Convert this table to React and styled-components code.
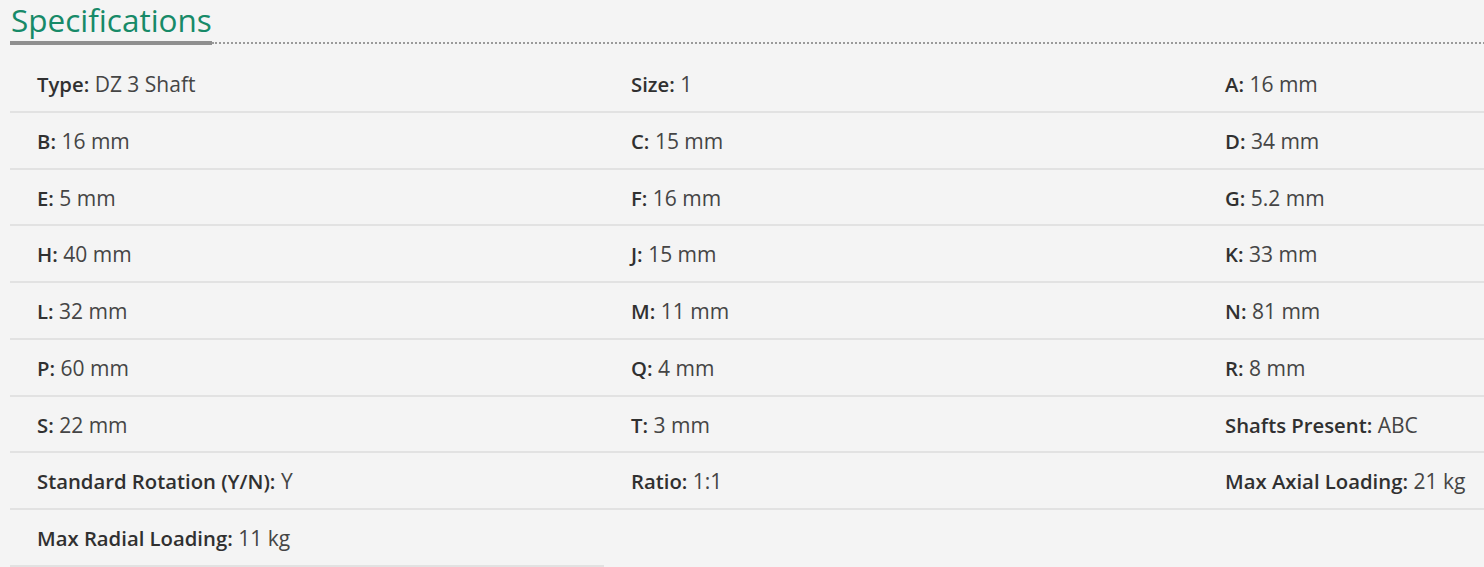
import React from 'react';
import styled, { createGlobalStyle } from 'styled-components';

const specs = [
  ['Type', 'DZ 3 Shaft'],
  ['Size', '1'],
  ['A', '16 mm'],
  ['B', '16 mm'],
  ['C', '15 mm'],
  ['D', '34 mm'],
  ['E', '5 mm'],
  ['F', '16 mm'],
  ['G', '5.2 mm'],
  ['H', '40 mm'],
  ['J', '15 mm'],
  ['K', '33 mm'],
  ['L', '32 mm'],
  ['M', '11 mm'],
  ['N', '81 mm'],
  ['P', '60 mm'],
  ['Q', '4 mm'],
  ['R', '8 mm'],
  ['S', '22 mm'],
  ['T', '3 mm'],
  ['Shafts Present', 'ABC'],
  ['Standard Rotation (Y/N)', 'Y'],
  ['Ratio', '1:1'],
  ['Max Axial Loading', '21 kg'],
  ['Max Radial Loading', '11 kg'],
];

const App = () => {
  return (
    <>
      <GlobalStyle />
      <Section>
        <TitleRow>
          <Title>Specifications</Title>
          <Dots />
        </TitleRow>
        <SpecGrid>
          {specs.map(([label, value]) => (
            <SpecCell key={label}>
              <Label>{label}:</Label> {value}
            </SpecCell>
          ))}
        </SpecGrid>
      </Section>
    </>
  );
};

const GlobalStyle = createGlobalStyle`
body {
  margin:0 ;
  background:#f4f4f4 ;
  overflow:hidden ;
  font-family:"Open Sans", "Liberation Sans", sans-serif;
}
`;

const Section = styled.section`
padding:0 0 0 10px ;
width:1782px ;
`;

const TitleRow = styled.div`
display:flex ;
align-items:flex-end ;
margin-bottom:11px ;
`;

const Title = styled.h2`
margin:0 ;
padding:0 0 1px 1px ;
font-size:31.5px ;
font-weight:400 ;
line-height:40px ;
color:#178a68 ;
border-bottom:4px solid #8f8f8f ;
`;

const Dots = styled.div`
flex:1 ;
margin-bottom:1px ;
border-bottom:2px dotted #9a9a9a ;
`;

const SpecGrid = styled.div`
display:grid ;
grid-template-columns:repeat(3, 594px) ;
`;

const SpecCell = styled.div`
height:54.75px ;
line-height:56px ;
padding:0 27px ;
white-space:nowrap ;
font-size:21px ;
color:#454545 ;
border-bottom:2px solid #e2e2e2 ;
`;

const Label = styled.b`
font-size:20.3px ;
font-weight:600 ;
color:#303030 ;
`;

export default App;
